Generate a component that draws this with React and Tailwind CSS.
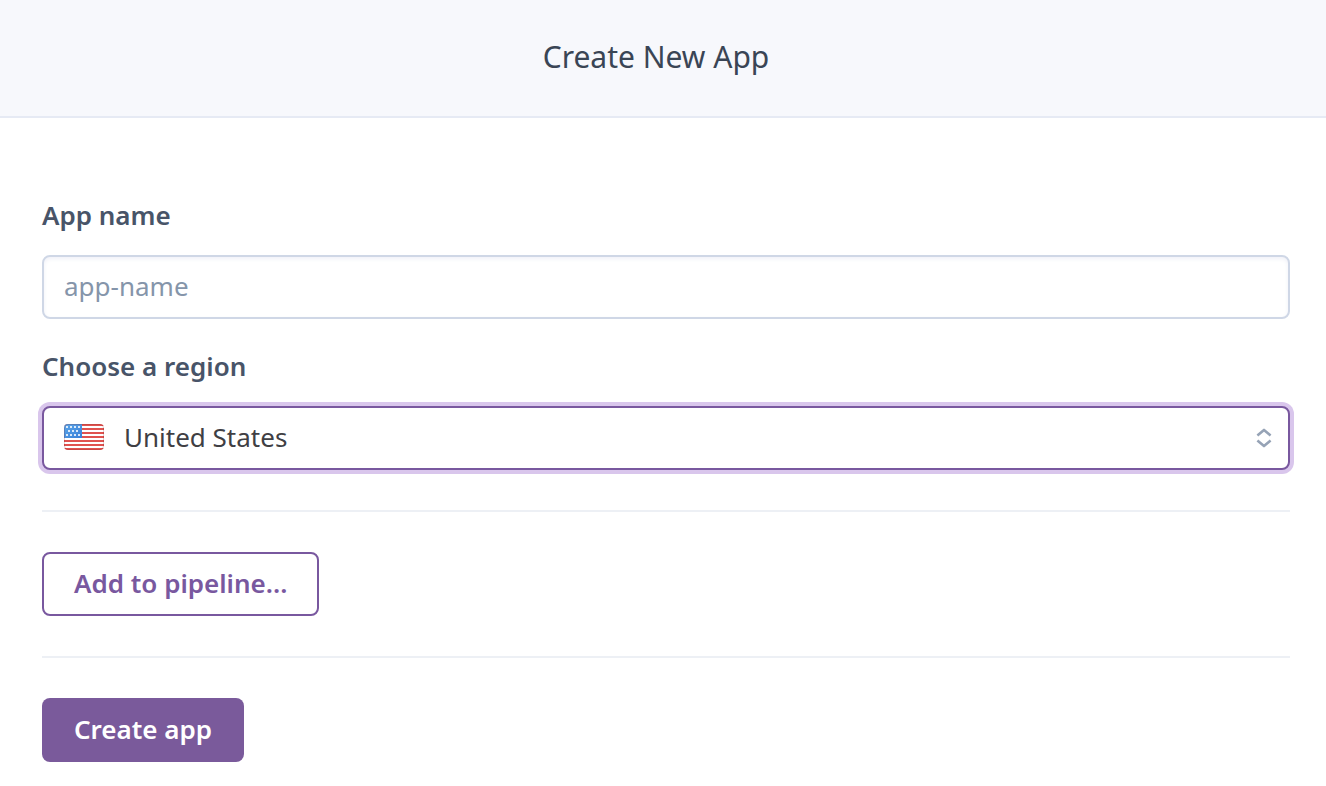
import React, { useState } from 'react';

const STRIPES = [0, 4, 8, 12, 16, 20, 24];
const STARS = [
  [2, 2], [6, 2], [10, 2], [14, 2],
  [4, 6], [8, 6], [12, 6],
  [2, 10], [6, 10], [10, 10], [14, 10],
];

const UsFlag = ({ className }) => (
  <svg className={className} width="40" height="26" viewBox="0 0 40 26" aria-hidden="true">
    <defs>
      <clipPath id="flag-shape">
        <rect width="40" height="26" rx="4" />
      </clipPath>
      <linearGradient id="flag-canton" x1="0" y1="0" x2="1" y2="1">
        <stop offset="0" stopColor="#5aa7ea" />
        <stop offset="1" stopColor="#3b7fd8" />
      </linearGradient>
    </defs>
    <g clipPath="url(#flag-shape)">
      <rect width="40" height="26" fill="#fff" />
      {STRIPES.map((y) => (
        <rect key={y} y={y} width="40" height="2" fill="#e0524f" />
      ))}
      <rect width="18" height="14" fill="url(#flag-canton)" />
      {STARS.map(([x, y]) => (
        <rect key={`${x}-${y}`} x={x} y={y} width="2" height="2" fill="#fff" fillOpacity="0.8" />
      ))}
    </g>
    <rect x="0.5" y="0.5" width="39" height="25" rx="3.5" fill="none" stroke="#7a2020" strokeOpacity="0.22" />
  </svg>
);

const App = () => {
  const [appName, setAppName] = useState('');
  const [region, setRegion] = useState('us');

  return (
    <div className="min-h-screen bg-white font-['Noto_Sans',sans-serif] text-[26px] leading-[34px]">
      <header className="border-b-2 border-[#e6eaf4] bg-[#f7f8fc] pt-[37px] pb-[39px] pr-3.5 text-center">
        <h1 className="text-[30px] leading-10 text-[#3a4555]">Create New App</h1>
      </header>

      <form className="pt-20 pr-9 pb-6 pl-[42px]" onSubmit={(e) => e.preventDefault()}>
        <label htmlFor="app-name" className="block w-fit font-semibold text-[#485468]">
          App name
        </label>
        <input
          id="app-name"
          type="text"
          placeholder="app-name"
          className="mt-[23px] block h-16 w-full rounded-lg border-2 border-[#cfd7e6] px-5 pb-0.5 text-[#3f3f44] shadow-[inset_0_2px_4px_#f0f1f8] outline-none placeholder:text-[#8595aa]"
          value={appName}
          onChange={(e) => setAppName(e.target.value)}
        />

        <label htmlFor="region" className="mt-[30px] block w-fit font-semibold text-[#485468]">
          Choose a region
        </label>
        <div className="relative mt-[23px]">
          <select
            id="region"
            className="block h-16 w-full appearance-none rounded-lg border-2 border-[#79589f] bg-white pr-14 pb-0.5 pl-20 text-[#3f3f44] ring-4 ring-[#d9c6ec] outline-none"
            value={region}
            onChange={(e) => setRegion(e.target.value)}
          >
            <option value="us">United States</option>
          </select>
          <UsFlag className="pointer-events-none absolute top-[18px] left-[22px]" />
          <svg
            className="pointer-events-none absolute top-[22px] right-4"
            width="20"
            height="20"
            viewBox="0 0 20 20"
            fill="none"
            stroke="#96a3b6"
            strokeWidth="2.6"
            strokeLinejoin="round"
            aria-hidden="true"
          >
            <path d="M3.4 7.4 10 1.9l6.6 5.5M3.4 12.6l6.6 5.5 6.6-5.5" />
          </svg>
        </div>

        <hr className="my-10 border-t-2 border-[#edf0f5]" />

        <button
          type="button"
          className="block h-16 rounded-lg border-2 border-[#79589f] px-[30px] pb-0.5 font-semibold text-[#79589f]"
        >
          Add to pipeline...
        </button>

        <hr className="my-10 border-t-2 border-[#edf0f5]" />

        <button type="submit" className="block h-16 rounded-lg bg-[#7a5a9b] px-8 pb-0.5 font-semibold text-white">
          Create app
        </button>
      </form>
    </div>
  );
};

export default App;
